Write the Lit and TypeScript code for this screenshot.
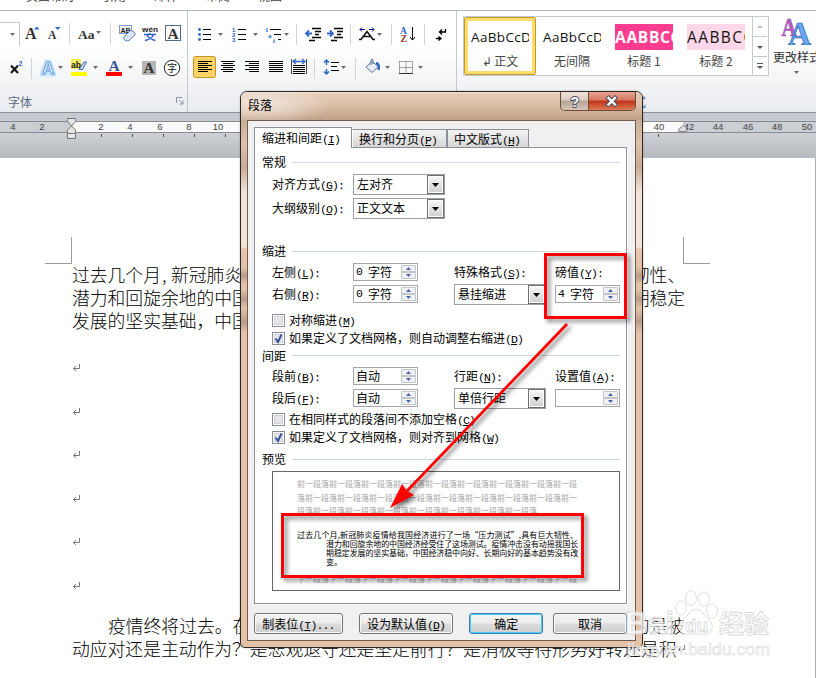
import { LitElement, html, svg, css, TemplateResult, SVGTemplateResult } from "lit";
import { customElement, property } from "lit/decorators.js";

const drop = (x: number, y: number) =>
  svg`<path d="M${x} ${y}h5l-2.5 3z" fill="#6b6b6b"/>`;

const sep = (x: number, y: number) =>
  svg`<path d="M${x + 0.5} ${y}v21" stroke="#d0d3d8"/>`;

const bars = (x: number, y: number, rows: number[][]) =>
  rows.map(([dx, w], i) => svg`<path d="M${x + dx} ${y + i * 2 + 0.5}h${w}" stroke="#000"/>`);

const serifA = (x: number, y: number, size: number, fill = "#333") =>
  svg`<text x=${x} y=${y} font-family="Liberation Serif, serif" font-weight="bold" font-size=${size} fill=${fill}>A</text>`;

/* A label followed by its underlined access key, set in half-width cells. */
const label = (cjk: string, key = "", tail = "") =>
  html`${cjk}${key ? html`<span class="m">(<u>${key}</u>)${tail}</span>` : ""}`;

const mnemonic = css`
  .m { font-family: "Liberation Mono", monospace; font-size: 11.500px; letter-spacing: -0.900px; line-height: 1; }
  u { text-underline-offset: 1px; }
`;

@customElement("word-ribbon")
class WordRibbon extends LitElement {
  static styles = css`
    :host { display: block; height: 113px; overflow: hidden; background: #fff; font: 12px "Noto Sans CJK SC", sans-serif; }
    .tabs { display: flex; gap: 28px; padding-left: 26px; box-sizing: border-box; overflow: hidden; color: #444; border-bottom: 1px solid #b4b8c2; height: 11px; }
    .tabs span { line-height: 18px; margin-top: -13px; white-space: nowrap; }
    .body { display: flex; height: 101px; border-bottom: 1px solid #8b9098; background: linear-gradient(#fff 0, #fff 35%, #e8ebef 100%); }
    .group { display: flex; flex-direction: column; border-right: 1px solid #c3c7ce; box-sizing: border-box; flex: none; }
    .font { width: 188px; }
    .para { width: 269px; }
    .styles { width: 312px; border-right: 0; }
    .row { display: flex; height: 34px; }
    .row:first-child { padding-top: 7px; }
    svg { flex: none; display: block; }
    .foot { display: flex; justify-content: space-between; color: #5f6b7c; line-height: 17px; padding: 7px 3px 0 8px; }
    .foot svg { margin-top: 4px; }
    .foot.mid { padding: 17px 0 0 165px; color: #4a6a94; }
    .gallery { display: flex; margin: 5px 0 0 6px; height: 60px; width: 306px; box-sizing: border-box; border: 1px solid #c5c9d0; background: #fff; flex: none; }
    .item { width: 72px; height: 58px; box-sizing: border-box; display: flex; flex-direction: column; align-items: center; padding-top: 7px; color: #444; }
    .item.on { border: 1px solid #c29b29; box-shadow: inset 0 0 0 3px #fbdc6c; border-radius: 2px; padding-top: 6px; }
    .sample { width: 58px; height: 26px; overflow: hidden; white-space: nowrap; font: 13.500px/26px "Open Sans", sans-serif; color: #111; letter-spacing: .350px; }
    .sample.h1 { background: #ff3d90; color: #fff; font-weight: bold; font-size: 15.500px; letter-spacing: .700px; }
    .sample.h2 { background: #ffd7e8; font-size: 15.500px; letter-spacing: 1.400px; }
    .name { line-height: 22px; }
    .scroll { width: 15px; margin-left: auto; display: flex; flex-direction: column; border-left: 1px solid #c5c9d0; }
    .scroll svg + svg { border-top: 1px solid #c5c9d0; }
    .change { width: 60px; margin-left: 4px; padding-top: 6px; color: #333; white-space: nowrap; flex: none; }
    .change div { line-height: 18px; margin-top: 3px; }
  `;

  cell(x: number, w: number, y: number, c: unknown): TemplateResult {
    return html`<svg width=${w} height="28" viewBox="${x} ${y} ${w} 28">${c}</svg>`;
  }

  render() {
    const a = (x: number, w: number, c: unknown) => this.cell(x, w, 19, c);
    const b = (x: number, w: number, c: unknown) => this.cell(x, w, 54, c);
    const blue = "#2f66c4";
    return html`
      <div class="tabs"><span>页面布局</span><span>引用</span><span>邮件</span><span>审阅</span><span>视图</span></div>
      <div class="body">
        <div class="group font">
          <div class="row">
            ${a(0, 22, svg`<path d="M-1 23.500h20.500v24.500h-21" fill="#fff" stroke="#c5c9d0"/>${drop(10, 34)}`)}
            ${a(22, 23, svg`${serifA(25, 40, 16)}<path d="M34 30.500h5.500l-2.700-3z" fill=${blue}/>`)}
            ${a(45, 22, svg`${serifA(48, 40, 11.5)}<path d="M55 28h5.500l-2.700 3z" fill=${blue}/>`)}
            ${a(67, 8, sep(69, 24))}
            ${a(75, 31, svg`<text x="78" y="39.500" font-family="Liberation Serif, serif" font-weight="bold" font-size="13.500" fill="#333">Aa</text>${drop(96, 32)}`)}
            ${a(106, 10, sep(110, 24))}
            ${a(116, 23, svg`<rect x="119.500" y="26.500" width="12" height="8" fill="#eef3fb" stroke="#7f9cc9"/><text x="120.500" y="33.500" font-size="7" font-weight="bold" font-family="Liberation Sans, sans-serif" fill="#222">AB</text><path d="M124 38l6-6q2-1 4 1t1 3l-6 5.500q-3 1-4.500-.5t-.5-3z" fill="#dbe6f5" stroke="#6383b3"/>`)}
            ${a(139, 23, svg`<text x="142" y="33" font-size="8" font-weight="bold" font-family="Liberation Sans, sans-serif" textLength="16" lengthAdjust="spacingAndGlyphs" fill="#222">wén</text><path d="M144 35.500h12M149.500 34v2M153.500 36q-2 4-8.500 5.500M147 36q2 4 8.500 5.500" fill="none" stroke="#2c5fd0" stroke-width="1.400"/>`)}
            ${a(162, 22, svg`<rect x="165.500" y="26.500" width="15" height="15" fill="#fff" stroke="#52698c"/>${serifA(167.5, 39.5, 15.5)}`)}
          </div>
          <div class="row">
            ${b(0, 28, svg`<path d="M11 67.500l7 7.500M18 67.500l-7 7.500" stroke="#111" stroke-width="2"/><text x="18.500" y="68" font-size="7" font-weight="bold" font-family="Liberation Sans, sans-serif" fill=${blue}>2</text>`)}
            ${b(28, 8, sep(31, 60))}
            ${b(36, 30, svg`<path d="M41 77l5-14h4l5 14h-5l-1-3h-2l-1 3z" fill="none" stroke="#c5e3fb" stroke-width="3" stroke-linejoin="round"/><text x="42" y="76" font-size="17" font-weight="bold" font-family="Liberation Sans, sans-serif" fill="#fff" stroke="#5d9be0">A</text>${drop(58, 68)}`)}
            ${b(66, 36, svg`<path d="M71 61h10v10h-10z" fill="#f5ee58"/><text x="71" y="69.500" font-size="8.500" font-weight="bold" font-family="Liberation Sans, sans-serif" fill="#222">ab</text><path d="M79 71.500l5-7.500h2.500l-4 7.500z" fill="#cfe0f5" stroke="#3f68a8"/><path d="M71 74h16v4h-16z" fill="#ff0"/>${drop(93, 68)}`)}
            ${b(102, 35, svg`${serifA(108.5, 73, 15.5, "#3b5998")}<path d="M106 74h16v4h-16z" fill="red"/>${drop(128, 68)}`)}
            ${b(137, 23, svg`<path d="M142 63h14v14h-14z" fill="#b5b5b5"/>${serifA(143.5, 75, 15)}`)}
            ${b(160, 24, svg`<circle cx="172" cy="70" r="7.700" fill="#fff" stroke="#222"/><text x="167" y="73.800" font-size="10" font-family="Noto Sans CJK SC, sans-serif" fill="#111">字</text>`)}
          </div>
          <div class="foot"><span>字体</span>${this.launcher()}</div>
        </div>
        <div class="group para">
          <div class="row">
            ${a(188, 39, svg`${[31, 36, 41].map((y) => svg`<circle cx="199.500" cy=${y - 0.5} r="1.400" fill=${blue}/><path d="M203 ${y - 0.5}h8" stroke="#000"/>`)}${drop(218, 34)}`)}
            ${a(227, 34, svg`${[31, 36, 41].map((y, i) => svg`<text x="232" y=${y + 2} font-size="6" font-weight="bold" font-family="Liberation Sans, sans-serif" fill=${blue}>${i + 1}</text><path d="M238 ${y - 0.5}h8" stroke="#000"/>`)}${drop(253, 34)}`)}
            ${a(261, 31, svg`<g font-size="7" font-weight="bold" font-family="Liberation Serif, serif" fill=${blue}><text x="265" y="33">1</text><text x="268" y="39">a</text><text x="273" y="44">i</text></g><path d="M270 30.500h11M274 35.500h7M278 40.500h3" stroke="#000"/>${drop(284, 34)}`)}
            ${a(292, 9, sep(296, 25))}
            ${a(301, 24, svg`<path d="M312 29.500h9M315 32.500h6M315 35.500h4M312 38.500h9M309 41.500h6" stroke="#000" stroke-width="1.500"/><path d="M312 34.500h-6m3-3l-3 3 3 3" stroke=${blue} fill="none" stroke-width="1.800"/>`)}
            ${a(325, 22, svg`<path d="M334 29.500h9M337 32.500h6M337 35.500h4M334 38.500h9M331 41.500h6" stroke="#000" stroke-width="1.500"/><path d="M327 34.500h6m-3-3l3 3-3 3" stroke=${blue} fill="none" stroke-width="1.800"/>`)}
            ${a(347, 9, sep(350, 25))}
            ${a(356, 31, svg`<path d="M360 30.500h5m-3-2l-2 2 2 2M369 30.500h5m-2-2l2 2-2 2" stroke="#000090" fill="none"/><path d="M359 40.500h2l6-8 6 8h2M362.500 37.500h9" stroke="#111" fill="none" stroke-width="1.600"/>${drop(377, 34)}`)}
            ${a(387, 9, sep(391, 25))}
            ${a(396, 24, svg`<g font-size="9.500" font-weight="bold" font-family="Liberation Serif, serif"><text x="400" y="35" fill=${blue}>A</text><text x="400.500" y="43" fill="#a03030">Z</text></g><path d="M412.500 28v13m-2.500-3l2.500 3 2.500-3" stroke="#000" fill="none"/>`)}
            ${a(420, 10, sep(424, 25))}
            ${a(430, 24, svg`<path d="M445.500 30v3h-6m2.500-2.500l-2.500 2.500 2.500 2.500M436 39.500h5m-2.500-2l2.500 2-2.500 2" stroke="#000" fill="none" stroke-width="1.300"/>`)}
          </div>
          <div class="row">
            ${b(188, 31, svg`<rect x="193.500" y="58.500" width="22" height="21" rx="2" fill="#fcd364" stroke="#c2952a"/>${bars(198, 63, [[0, 14], [0, 10], [0, 14], [0, 10], [0, 14], [0, 10]])}`)}
            ${b(219, 24, bars(221, 63, [[0, 14], [2, 10], [0, 14], [2, 10], [0, 14], [2, 10]]))}
            ${b(243, 24, bars(245, 63, [[0, 14], [4, 10], [0, 14], [4, 10], [0, 14], [4, 10]]))}
            ${b(267, 22, bars(269, 63, [[0, 14], [0, 14], [0, 14], [0, 14], [0, 14], [0, 14]]))}
            ${b(289, 21, svg`<path d="M291.500 61v15M306.500 61v15" stroke="#444"/><path d="M293 63.500h12m-9-2.500l-3 2.500 3 2.500m6-5l3 2.500-3 2.500" stroke=${blue} fill="none" stroke-width="1.300"/>${bars(293, 67, [[0, 12], [0, 12], [0, 12], [0, 12], [0, 12]])}`)}
            ${b(310, 9, sep(314, 60))}
            ${b(319, 31, svg`<path d="M326.500 62v5m-2.500-2.500l2.500-2.500 2.500 2.500M326.500 71v5m-2.500-2.500l2.500 2.500 2.500-2.500" stroke=${blue} fill="none" stroke-width="1.500"/><path d="M331 64.500h8M331 68.500h6M331 72.500h8" stroke="#000"/>${drop(341, 68)}`)}
            ${b(350, 10, sep(355, 60))}
            ${b(360, 34, svg`<path d="M366 69l6-5.500 6.500 5-6.500 6z" fill="#e8eef7" stroke="#5a7292"/><path d="M371 67v-5q1.500-1.500 2 0v4" fill="none" stroke="#5a7292"/><path d="M376 65q4 1 2.500 7" fill="none" stroke=${blue} stroke-width="2.400"/>${drop(385, 68)}`)}
            ${b(394, 34, svg`<path d="M399.500 63.500h13v12M399.500 63.500v12M406 63.500v12M399.500 69.500h13" fill="none" stroke="#555" stroke-dasharray="1 1"/><path d="M399 75.500h14" stroke="#333"/>${drop(418, 68)}`)}
          </div>
        </div>
        <div class="group styles">
          <div class="gallery">
            <div class="item on"><div class="sample">AaBbCcD</div><div class="name">↲ 正文</div></div>
            <div class="item"><div class="sample">AaBbCcD</div><div class="name">无间隔</div></div>
            <div class="item"><div class="sample h1">AABBCC</div><div class="name">标题 1</div></div>
            <div class="item"><div class="sample h2">AABBCC</div><div class="name">标题 2</div></div>
            <div class="scroll">
              <svg width="14" height="19"><path d="M4 11h6l-3-3z" fill="#bbb"/></svg>
              <svg width="14" height="19"><path d="M4 9h6l-3 3z" fill="#555"/></svg>
              <svg width="14" height="18"><path d="M4 6.500h6" stroke="#555"/><path d="M4 9h6l-3 3z" fill="#555"/></svg>
            </div>
          </div>
          <div class="foot mid">样式</div>
        </div>
        <div class="change">
          <svg width="46" height="28" viewBox="773 17 46 28">
            <g font-family="Liberation Serif, serif" font-weight="bold"><text x="781.500" y="36" font-size="25" fill="#b45fc4" stroke="#8b3f9e" stroke-width=".5" textLength="15" lengthAdjust="spacingAndGlyphs">A</text>
            <text x="788" y="44.500" font-size="34" fill="#6ba6ee" stroke="#2a62b4" stroke-width=".7" textLength="23" lengthAdjust="spacingAndGlyphs">A</text></g>
          </svg>
          <div>更改样式</div>
          <svg width="46" height="12" viewBox="773 70 46 12">${drop(794, 75)}</svg>
        </div>
      </div>`;
  }

  launcher() {
    return html`<svg width="8" height="8"><path d="M.5 6V.5H6M3 3l3.500 3.500M7 3.500V7H3.500" stroke="#8a919c" fill="none"/></svg>`;
  }
}

@customElement("word-ruler")
class WordRuler extends LitElement {
  static styles = css`
    :host { display: block; height: 45px; background: linear-gradient(#c6cad0, #cdd1d6 45%, #b5b9be); }
    svg { display: block; }
  `;
  render() {
    const nums: [string, number][] = [["4", 13], ["2", 42], ["2", 101], ["4", 130], ["6", 160], ["8", 189], ["10", 218], ["40", 659], ["42", 689], ["44", 718], ["46", 748], ["48", 777], ["50", 807]];
    return html`<svg width="816" height="45" viewBox="0 113 816 45">
      <path d="M0 121h816v12H0z" fill="#cbcfd4"/>
      <path d="M72 121h611v12H72z" fill="#fafafa"/>
      <path d="M0 121.500h816M0 132.500h816" stroke="#868b93"/>
      <g font-family="Liberation Sans, sans-serif" font-size="9.500" fill="#444" text-anchor="middle">
        ${nums.map(([t, x]) => svg`<text x=${x} y="130">${t}</text>`)}
      </g>
      ${[101, 132, 163, 194, 225, 658].map((x) => svg`<path d="M${x + 0.5} 134v3" stroke="#555"/>`)}
      <path d="M67.500 118.500h8v3l-4 4.500 4 4v8.500h-8v-8.500l4-4-4-4.500zM67.500 133.500h8" fill="#e6e6e6" stroke="#777"/>
      <path d="M678.500 131.500v-2l5-4.500 3 3v3.500z" fill="#ddd" stroke="#888"/>
    </svg>`;
  }
}

@customElement("word-page")
class WordPage extends LitElement {
  static styles = css`
    :host { display: block; height: 520px; background: #fff; border-right: 1px solid #a9adb5; box-sizing: border-box; overflow: hidden; font: 300 17.800px/23px "Noto Sans CJK SC", sans-serif; color: #000; }
    .crops { display: flex; justify-content: space-between; margin: 79px 105px 0 45px; height: 27px; }
    .crops i { width: 27px; box-sizing: border-box; border: 0 solid #9c9c9c; border-bottom-width: 1px; }
    .crops i:first-child { border-right-width: 1px; }
    .crops i:last-child { border-left-width: 1px; }
    .text { width: 613px; margin: -1px 0 0 72px; }
    .line { display: flex; justify-content: space-between; white-space: nowrap; height: 23px; }
    .indent { padding-left: 36px; }
    .last { justify-content: flex-start; gap: 1px; }
    .half { display: inline-block; width: 10px; padding-left: 1px; box-sizing: border-box; }
    .marks { height: 250px; margin: 32px 0 0 1px; display: flex; flex-direction: column; }
    .marks svg { margin-bottom: 35.600px; }
    svg { flex: none; }
    .last svg { align-self: center; }
  `;
  mark() {
    return html`<svg width="8" height="8"><path d="M6.500 0v4.500h-6M3 2L.5 4.500 3 7" stroke="#777" fill="none"/></svg>`;
  }
  render() {
    return html`
      <div class="crops"><i></i><i></i></div>
      <div class="text">
        <div class="line"><span>过去几个月<span class="half">,</span>新冠肺炎</span><span>韧性、</span></div>
        <div class="line"><span>潜力和回旋余地的中国</span><span>期稳定</span></div>
        <div class="line"><span>发展的坚实基础，中国</span></div>
        <div class="marks">${Array.from({ length: 6 }, () => this.mark())}</div>
        <div class="line indent"><span>疫情终将过去。在</span><span>的是被</span></div>
        <div class="line last"><span>动应对还是主动作为？是悲观退守还是坚定前行？是消极等待形势好转还是积</span>${this.mark()}</div>
      </div>`;
  }
}

@customElement("form-select")
class FormSelect extends LitElement {
  @property() value = "";
  static styles = css`
    :host { display: flex; box-sizing: border-box; width: 92px; height: 21px; border: 1px solid #9b9ea6; background: #fff; align-items: center; padding-left: 3px; }
    span { flex: 1; line-height: 18px; padding-bottom: 1px; white-space: nowrap; }
    svg { flex: none; border: 1px solid #6f6f6f; background: linear-gradient(#f6f6f6, #cfcfcf); box-shadow: inset 0 0 0 1px #fff; }
  `;
  render() {
    return html`<span>${this.value}</span><svg width="15" height="17"><path d="M4 7h7l-3.500 4z"/></svg>`;
  }
}

@customElement("form-spin")
class FormSpin extends LitElement {
  @property() value = "";
  static styles = css`
    :host { display: flex; box-sizing: border-box; width: 65px; height: 18px; border: 1px solid #a4a7ae; background: #fff; align-items: center; padding: 0 1px 0 2px; }
    span { flex: 1; line-height: 16px; white-space: pre; }
    .n { flex: none; font-family: "Liberation Mono", monospace; font-size: 11.500px; width: 12px; }
    svg { flex: none; }
  `;
  render() {
    const [n, unit] = this.value.includes(" ") ? this.value.split(" ") : ["", this.value];
    return html`${n ? html`<span class="n">${n}</span>` : ""}<span>${unit}</span>
      <svg width="15" height="16">
        <path d="M.5 1.500h14v6H.5zM.5 8.500h14v6H.5z" fill="#f1f1f3" stroke="#c3c5ca"/>
        <path d="M5 6h5L7.500 3zM5 10h5l-2.500 3z" fill="#4a62b0"/>
      </svg>`;
  }
}

@customElement("form-check")
class FormCheck extends LitElement {
  @property({ type: Boolean }) checked = false;
  static styles = css`
    :host { display: flex; align-items: center; gap: 4px; height: 18px; padding-left: 10px; white-space: nowrap; }
    svg { flex: none; }
  `;
  render() {
    return html`<svg width="13" height="13">
      <rect x=".5" y=".5" width="12" height="12" fill="#fff" stroke="#8b8e94"/><rect x="2.500" y="2.500" width="8" height="8" fill="#e4e6ea" stroke="#cfd2d8"/>
      ${this.checked ? svg`<path d="M3.500 6.500l2.500 3.500 3.500-7.500" fill="none" stroke="#36509c" stroke-width="1.900"/>` : ""}
    </svg><span><slot></slot></span>`;
  }
}

@customElement("paragraph-preview")
class ParagraphPreview extends LitElement {
  static styles = css`
    :host { display: block; box-sizing: border-box; height: 120px; border: 1px solid #666; background: #fff; padding: 5px 0 0 24px; font: 8px/13.600px "Noto Sans CJK SC", sans-serif; color: #a5a5a5; white-space: nowrap; overflow: hidden; }
    div { width: 281px; }
    .now { color: #000; line-height: 9px; margin: 12px 0 6px; }
    .now p { margin: 0 0 0 29px; letter-spacing: -0.120px; }
    .now p:first-child { margin-left: 0; letter-spacing: 0; text-align-last: justify; }
  `;
  render() {
    const prev = "前一段落".repeat(9);
    return html`
      <div>${prev.slice(0, 35)}</div>
      <div>${("落" + prev).slice(0, 35)}</div>
      <div>${"段落" + prev.slice(0, 28)}</div>
      <div class="now">
        <p>过去几个月,新冠肺炎疫情给我国经济进行了一场“压力测试”,具有巨大韧性、</p>
        <p>潜力和回旋余地的中国经济经受住了这场测试。疫情冲击没有动摇我国长</p>
        <p>期稳定发展的坚实基础，中国经济稳中向好、长期向好的基本趋势没有改</p>
        <p>变。</p>
      </div>
      <div>${"下一段落".repeat(9).slice(0, 35)}</div>`;
  }
}

@customElement("paragraph-dialog")
class ParagraphDialog extends LitElement {
  static styles = [mnemonic, css`
    :host { display: flex; flex-direction: column; box-sizing: border-box; width: 403px; height: 557px; border: 1px solid #2d2622; border-radius: 7px 7px 5px 5px; overflow: hidden; color: #000; font: 12px/18px "Noto Sans CJK SC", sans-serif; background: linear-gradient(#e2c7b1 0, #cfb29a 20px, #c9ad96 29px, #dcc3ae 50px, #c9ab95 75px, #f0e4d9 100px, #f0e4d9 155px, #e6c5aa 157px, #e3c2a8 175px, #b99c88 184px, #e3c2a8 192px, #e3c2a8 198px, #b99c88 207px, #e3c2a8 216px, #b99c88 230px, #e3c2a8 240px); padding: 0 6px 6px; }
    .title { height: 28px; flex: none; margin: 0 -6px; padding-left: 7px; display: flex; justify-content: space-between; background: radial-gradient(ellipse 70px 22px at 20px 12px, #f2e6dc, transparent), linear-gradient(#f4e7dc 0, #e4cab4 2px, #e0c5ae 35%, #cfb199 70%, #bfa188 100%); }
    .title span { line-height: 26px; }
    .caption { display: flex; height: 19px; width: 76px; margin-right: 6px; box-sizing: border-box; border: 1px solid #6b4b3c; border-top: 0; border-radius: 0 0 5px 5px; overflow: hidden; }
    .help { width: 27px; background: linear-gradient(#eee3db, #dccdc1 45%, #b9a595 50%, #d5c6b8); border-right: 1px solid #6b4b3c; }
    .close { flex: 1; background: linear-gradient(#e9a494, #d67660 45%, #bd3418 50%, #de7a55); }
    .caption svg { display: block; margin: 0 auto; }
    .client { flex: 1; border: 1px solid #6e5c50; background: #f0f0f0; padding: 6px 8px 0 6px; display: flex; flex-direction: column; }
    .tabs { display: flex; align-items: flex-end; height: 20px; flex: none; }
    .tab { box-sizing: border-box; height: 18px; width: 95px; border: 1px solid #8c8f98; border-bottom: 0; border-left-color: #fff; background: linear-gradient(#f4f4f4, #d6d6d6); line-height: 17px; padding-left: 6px; white-space: nowrap; }
    .tab.last { width: 82px; border-left-color: #8c8f98; }
    .tab.on { width: 98px; height: 21px; border-left-color: #8c8f98; margin-bottom: -1px; background: #fff; line-height: 20px; padding-left: 7px; z-index: 1; }
    .panel { box-sizing: border-box; height: 457px; flex: none; border: 1px solid #8c8f98; background: #fff; box-shadow: 1px 1px 0 #fff; padding: 4px 6px 0 7px; display: flex; flex-direction: column; }
    .section { display: flex; align-items: center; gap: 6px; height: 20px; flex: none; }
    .section::after { content: ""; flex: 1; height: 1px; background: #ccd9e4; }
    .indents { margin-top: 21px; }
    .spacing { height: 17px; margin-bottom: 1px; }
    .preview { margin-top: 3px; }
    .row { display: grid; grid-template-columns: 81px 101px 101px 65px; align-items: center; padding-left: 10px; height: 22px; flex: none; white-space: nowrap; }
    .tall { height: 24px; }
    .gap { margin-top: 6px; }
    .step { margin-top: 1px; }
    paragraph-preview { margin: 2px 0 0 10px; }
    .actions { display: flex; margin-top: 9px; }
    .btn { box-sizing: border-box; height: 21px; border: 1px solid #757575; border-radius: 3px; background: linear-gradient(#f4f4f4, #ebebeb 48%, #dcdcdc 52%, #cfcfcf); box-shadow: inset 0 0 0 1px #fafafa; text-align: center; line-height: 19px; white-space: nowrap; }
    .w1 { width: 89px; margin-right: 16px; }
    .w2 { width: 95px; margin-right: 16px; }
    .w3 { width: 74px; margin-right: 10px; border-color: #3c7fb1; box-shadow: inset 0 0 0 1px #48cdf5; }
    .w4 { width: 74px; }
  `];

  glyph(c: SVGTemplateResult) {
    return html`<svg width="26" height="18">${c}</svg>`;
  }

  render() {
    return html`
      <div class="title">
        <span>段落</span>
        <div class="caption">
          <div class="help">${this.glyph(svg`<text x="8.500" y="14.500" font-family="Liberation Sans, sans-serif" font-weight="bold" font-size="14" fill="#fff" stroke="#4c5268" stroke-width="1.800" paint-order="stroke">?</text>`)}</div>
          <div class="close">${this.glyph(svg`<path d="M9.500 6l6.500 6.500M16 6l-6.500 6.500" stroke="#4c4a5c" stroke-width="4.400" stroke-linecap="square"/><path d="M9.500 6l6.500 6.500M16 6l-6.500 6.500" stroke="#fff" stroke-width="2.400" stroke-linecap="square"/>`)}</div>
        </div>
      </div>
      <div class="client">
        <div class="tabs">
          <div class="tab on">${label("缩进和间距", "I")}</div>
          <div class="tab">${label("换行和分页", "P")}</div>
          <div class="tab last">${label("中文版式", "H")}</div>
        </div>
        <div class="panel">
          <div class="section">常规</div>
          <div class="row tall"><span>${label("对齐方式", "G", ":")}</span><form-select value="左对齐"></form-select></div>
          <div class="row tall"><span>${label("大纲级别", "O", ":")}</span><form-select value="正文文本"></form-select></div>
          <div class="section indents">缩进</div>
          <div class="row"><span>${label("左侧", "L", ":")}</span><form-spin value="0 字符"></form-spin><span>${label("特殊格式", "S", ":")}</span><span>${label("磅值", "Y", ":")}</span></div>
          <div class="row"><span>${label("右侧", "R", ":")}</span><form-spin value="0 字符"></form-spin><form-select value="悬挂缩进"></form-select><form-spin value="4 字符"></form-spin></div>
          <form-check class="gap">${label("对称缩进", "M")}</form-check>
          <form-check checked>${label("如果定义了文档网格，则自动调整右缩进", "D")}</form-check>
          <div class="section spacing">间距</div>
          <div class="row"><span>${label("段前", "B", ":")}</span><form-spin value="自动"></form-spin><span>${label("行距", "N", ":")}</span><span>${label("设置值", "A", ":")}</span></div>
          <div class="row"><span>${label("段后", "F", ":")}</span><form-spin value="自动"></form-spin><form-select value="单倍行距"></form-select><form-spin></form-spin></div>
          <form-check class="step">${label("在相同样式的段落间不添加空格", "C")}</form-check>
          <form-check checked>${label("如果定义了文档网格，则对齐到网格", "W")}</form-check>
          <div class="section preview">预览</div>
          <paragraph-preview></paragraph-preview>
        </div>
        <div class="actions">
          <div class="btn w1">${label("制表位", "T", "...")}</div>
          <div class="btn w2">${label("设为默认值", "D")}</div>
          <div class="btn w3">确定</div>
          <div class="btn w4">取消</div>
        </div>
      </div>`;
  }
}

@customElement("app-root")
class AppRoot extends LitElement {
  static styles = css`
    :host { display: block; position: relative; width: 816px; height: 678px; overflow: hidden; }
    paragraph-dialog { position: absolute; left: 240px; top: 91px; box-shadow: 0 0 2px rgba(0, 0, 0, .3); }
    .over { position: absolute; left: 0; top: 0; pointer-events: none; }
    .callout { filter: drop-shadow(3px 3px 2px rgba(0, 0, 0, .5)); }
  `;
  render() {
    return html`
      <word-ribbon></word-ribbon>
      <word-ruler></word-ruler>
      <word-page></word-page>
      <paragraph-dialog></paragraph-dialog>
      <svg class="over" width="816" height="678">
        <g class="callout">
          <rect x="545.500" y="254.500" width="80" height="63" fill="none" stroke="red" stroke-width="3"/>
          <rect x="282.500" y="514.500" width="300" height="62" fill="none" stroke="red" stroke-width="3"/>
          <path d="M567 324L407 491" stroke="red" stroke-width="2.800"/>
          <path d="M390 508l12-24 5 7 7 4z" fill="red"/>
        </g>
        <g fill="#fff" fill-opacity=".7" stroke="#dadada" stroke-width=".9" font-family="Liberation Sans, sans-serif">
          <text x="625" y="634" font-size="31" font-weight="bold" textLength="49" lengthAdjust="spacingAndGlyphs">Bai</text>
          <ellipse cx="691" cy="598" rx="5.500" ry="7.500"/><ellipse cx="704" cy="599" rx="5.500" ry="7"/>
          <ellipse cx="681" cy="608" rx="5.500" ry="7"/><ellipse cx="712" cy="611" rx="5.500" ry="7"/>
          <path d="M696 609q5 0 9 7 9 6 7 13-3 7-10 5h-12q-8 2-11-5-1-7 8-13 4-7 9-7z"/>
          <text x="685" y="632" font-size="19" font-weight="bold">du</text>
          <text x="719" y="633" font-size="25" font-weight="bold" font-family="Noto Sans CJK SC, sans-serif">经验</text>
          <text x="627" y="655" font-size="16" stroke-width=".6" textLength="143" lengthAdjust="spacingAndGlyphs">jingyan.baidu.com</text>
        </g>
      </svg>`;
  }
}
